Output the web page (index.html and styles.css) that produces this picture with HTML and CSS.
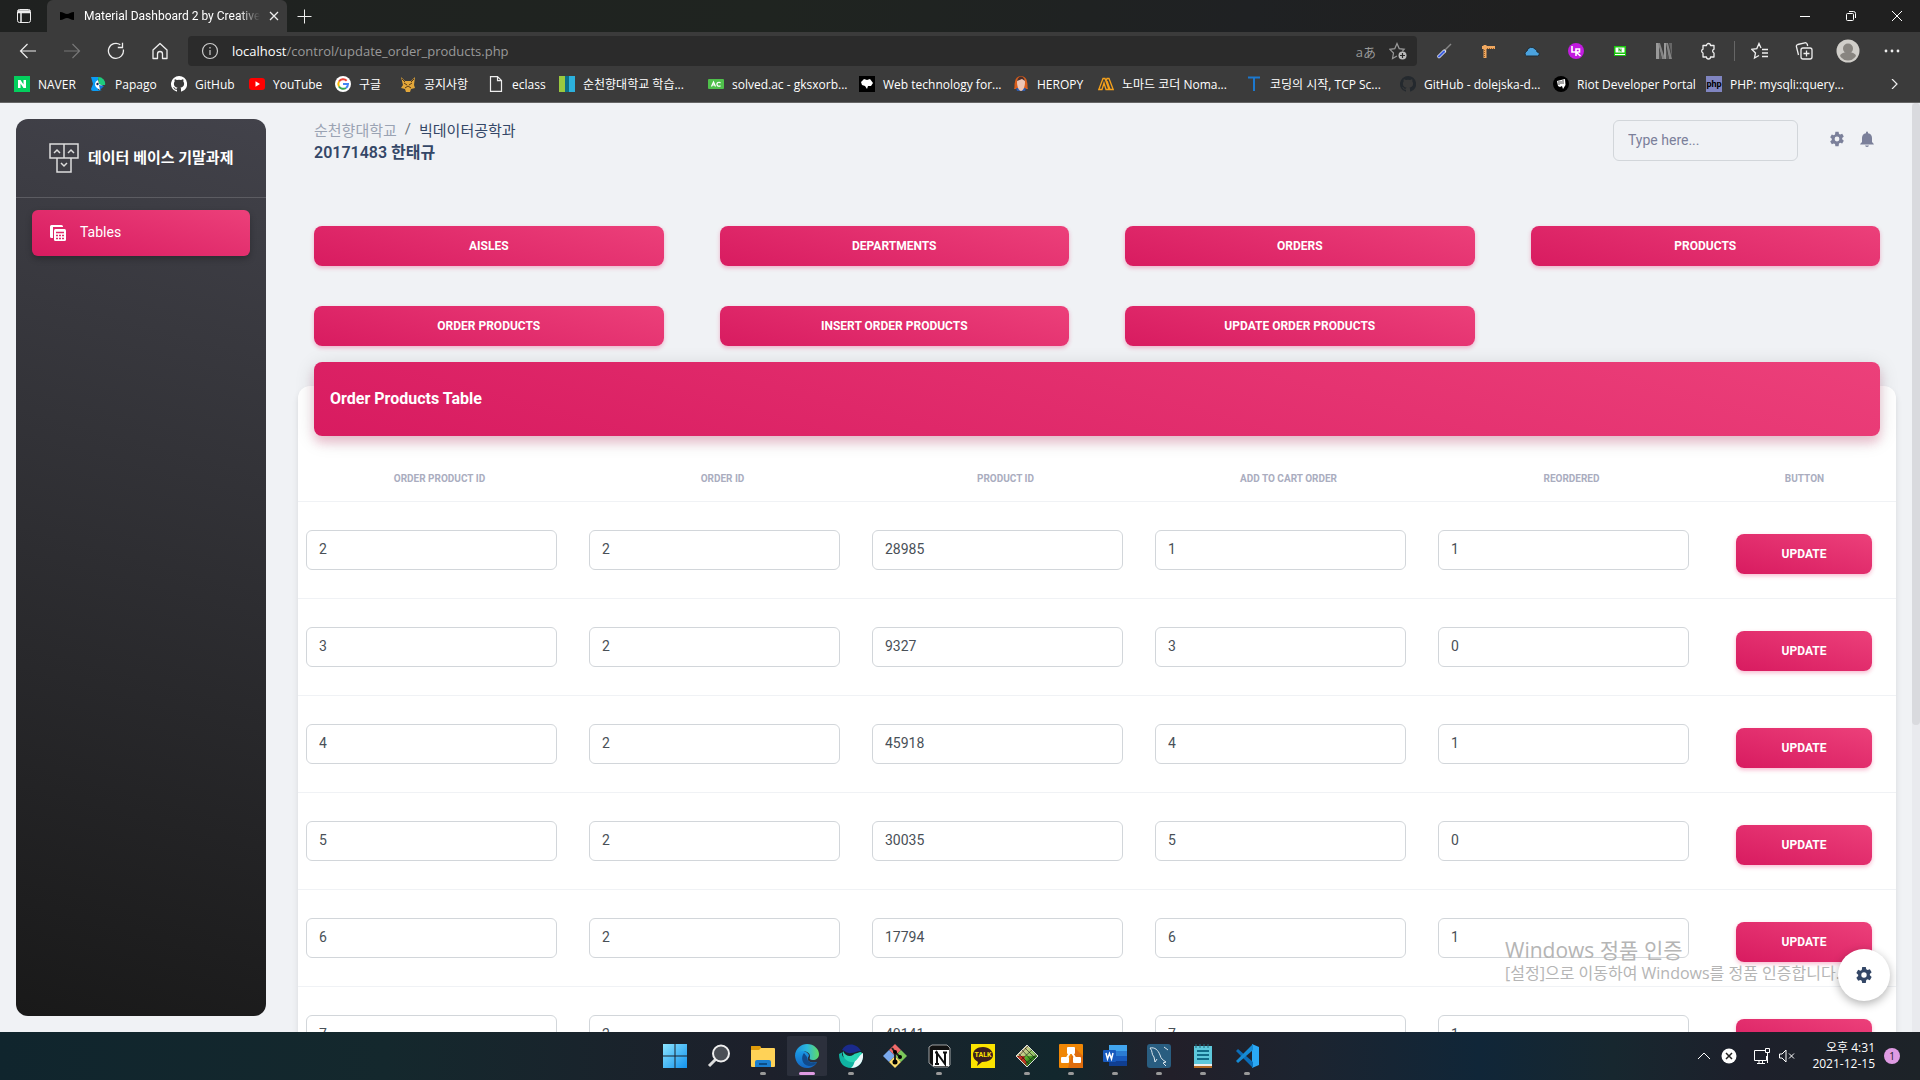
FILE: index.html
```html
<!DOCTYPE html>
<html lang="ko">
<head>
<meta charset="utf-8">
<title>Material Dashboard 2 by Creative Tim</title>
<link rel="stylesheet" href="styles.css">
</head>
<body>
<div class="tabstrip">
  <button class="tab-actions" aria-label="Tab actions"><svg class="i16" viewBox="0 0 16 16" fill="none" stroke="#eee"><rect x="1.500" y="1.500" width="13" height="13" rx="2"/><path d="M2 3h12M2 4.500h12M5 5v9" stroke-width="1.500"/></svg></button>
  <div class="tab">
    <svg class="i16" viewBox="0 0 16 16"><path d="M1 4c3 0 5 2 7 2s4-2 7-2v8c-3 0-5-2-7-2s-4 2-7 2z"/></svg>
    <span class="tab-title">Material Dashboard 2 by Creative</span>
    <button class="tab-close" aria-label="Close tab"><svg class="i10" viewBox="0 0 10 10" stroke="#eee" stroke-width="1.300"><path d="M1 1l8 8M9 1l-8 8"/></svg></button>
  </div>
  <button class="tab-new" aria-label="New tab"><svg class="i16" viewBox="0 0 16 16" stroke="#eee"><path d="M8.500 1.500v14M1.500 8.500h14"/></svg></button>
  <div class="window-buttons">
    <button aria-label="Minimize"><svg class="i10" viewBox="0 0 10 10" stroke="#fff"><path d="M0 5.500h10"/></svg></button>
    <button aria-label="Restore"><svg class="i10" viewBox="0 0 10 10" stroke="#fff" fill="none"><rect x=".5" y="2.500" width="7" height="7" rx="1"/><path d="M3 .5h4.500a2 2 0 0 1 2 2V7"/></svg></button>
    <button aria-label="Close"><svg class="i10" viewBox="0 0 10 10" stroke="#fff"><path d="M0 0l10 10M10 0L0 10"/></svg></button>
  </div>
</div>

<div class="toolbar">
  <button aria-label="Back"><svg class="i18" viewBox="0 0 18 18" fill="none" stroke="#eee" stroke-width="1.200"><path d="M17 9H1.500M8.500 2l-7 7 7 7"/></svg></button>
  <button aria-label="Forward"><svg class="i18" viewBox="0 0 18 18" fill="none" stroke="#777" stroke-width="1.200"><path d="M1 9h15.500M9.500 2l7 7-7 7"/></svg></button>
  <button aria-label="Reload"><svg class="i18" viewBox="0 0 18 18" fill="none" stroke="#eee" stroke-width="1.300"><path d="M16.300 7.500a7.500 7.500 0 1 1-3-4.700M15.500.8v4.700h-4.700"/></svg></button>
  <button aria-label="Home"><svg class="i18" viewBox="0 0 18 18" fill="none" stroke="#eee" stroke-width="1.300"><path d="M2 8l7-6.500L16 8v8.500h-4.500V12a2.500 2.500 0 0 0-5 0v4.500H2z" stroke-linejoin="round"/></svg></button>
  <div class="address">
    <svg class="i18" viewBox="0 0 18 18" fill="none" stroke="#ccc" stroke-width="1.200"><circle cx="9" cy="9" r="7.500"/><path d="M9 8v5M9 5v1.500"/></svg>
    <span class="url"><b>localhost</b>/control/update_order_products.php</span>
    <span class="translate">aあ</span>
    <svg class="i18" viewBox="0 0 18 18" fill="none" stroke="#999" stroke-width="1.200"><path d="M8 14l-4.500 2.500 1-5.500L.8 7.300l5-.7L8 1.500l2.200 5.100 5 .7-2 2"/><circle cx="13.500" cy="13.500" r="4" fill="#bbb" stroke="none"/><path d="M13.500 11v5M11 13.500h5" stroke="#2b2b2b"/></svg>
  </div>
  <div class="extensions">
    <button aria-label="Color picker"><svg class="i16" viewBox="0 0 16 16"><path d="M8.500 8L3 13.500" stroke="#eee" stroke-width="3.500" stroke-linecap="round"/><path d="M8 8.500L3 13.500" stroke="#3d5fe0" stroke-width="2.200" stroke-linecap="round"/><path d="M9 7l6-6" stroke="#888" stroke-width="1.500"/></svg></button>
    <button aria-label="Page ruler"><svg class="i16" viewBox="0 0 16 16"><path d="M2 4.500h13M5 2v13" stroke="#f0a860" stroke-width="3"/><path d="M7 5.500h8M4.500 7v7" stroke="#9a5f25" stroke-dasharray="1 1"/></svg></button>
    <button aria-label="Cloud"><svg class="i16" viewBox="0 0 16 16"><path d="M2.500 13a2.700 2.700 0 0 1 .5-5 4.500 4.500 0 0 1 8-2 2.800 2.800 0 0 1 2 3 2 2 0 0 1 .5 4z" fill="#4ba3df" stroke="#1f2e38"/></svg></button>
    <button aria-label="LiveReload"><svg class="i16" viewBox="0 0 16 16"><circle cx="8" cy="8" r="8" fill="#c21be0"/><path d="M4 3v6h3.500M8 13V6h3.500v3H8l4.500 4" fill="none" stroke="#fff" stroke-width="1.600"/></svg></button>
    <button aria-label="Naver"><svg class="i16" viewBox="0 0 16 16"><path d="M2 3h12v10H2z" fill="#19c60d"/><path d="M3.500 4.500h9v5h-9zM3 11h10v1H3z" fill="#fff"/><path d="M7 8.500v-3l2 3v-3" stroke="#19a010" fill="none"/></svg></button>
    <button aria-label="Notifier"><svg class="i16" viewBox="0 0 16 16"><path d="M0 0h3v16H0zM8 0h2v16H8z" fill="#999"/><path d="M2 0h2l5 16H6zM10 0h2l4 16h-3z" fill="#858585"/><path d="M13 0h3v14z" fill="#666"/><path d="M3 5v11h3zM10 5v11h3z" fill="#555"/></svg></button>
    <button aria-label="Extensions"><svg class="i18" viewBox="0 0 18 18" fill="none" stroke="#eee" stroke-width="1.300"><path d="M4 3.500h3.500a2 2 0 0 1 4 0H15v3.700a2 2 0 0 0 0 3.800v4h-3.500a2 2 0 0 1-4 0H4V11a2 2 0 0 1 0-3.800z" stroke-linejoin="round"/></svg></button>
  </div>
  <div class="browser-tools">
    <button aria-label="Favorites"><svg class="i18" viewBox="0 0 18 18" fill="none" stroke="#eee" stroke-width="1.300"><path d="M8 13.500L3.500 16l1-5L.8 7.300l5-.7L8 1.500l2 4.500M11 7.500h6M11 11h6M11 14.500h6"/></svg></button>
    <button aria-label="Collections"><svg class="i18" viewBox="0 0 18 18" fill="none" stroke="#eee" stroke-width="1.300"><rect x="6" y="6" width="11" height="11" rx="2"/><path d="M11.500 8.500v6M8.500 11.500h6M3.500 13L1.500 5a2 2 0 0 1 1.300-2.500l7-1.700a2 2 0 0 1 2.400 1.500L12.700 4"/></svg></button>
    <button aria-label="Profile"><svg class="i24" viewBox="0 0 24 24"><circle cx="12" cy="12" r="11.500" fill="#d0cec9"/><circle cx="12" cy="9.500" r="5" fill="#888580"/><path d="M4 17a8 4 0 0 1 16 0 9.500 9.500 0 0 1-16 0z" fill="#888580"/></svg></button>
    <button aria-label="Settings and more"><svg class="i16" viewBox="0 0 16 16" fill="#eee"><circle cx="2" cy="8" r="1.400"/><circle cx="8" cy="8" r="1.400"/><circle cx="14" cy="8" r="1.400"/></svg></button>
  </div>
</div>

<nav class="bookmarks">
  <a href="#"><svg class="i16" viewBox="0 0 16 16"><path d="M0 0h16v16H0z" fill="#03cf5d"/><path d="M4 12V4h2.500l3 4.500V4H12v8H9.500l-3-4.500V12z" fill="#fff"/></svg><span>NAVER</span></a>
  <a href="#"><svg class="i16" viewBox="0 0 16 16"><path d="M0 1h7v13l4 1H2a2 2 0 0 1-2-2l2-5z" fill="#0b9cf5"/><path d="M7 1a7 6.500 0 0 1 7 8H8z" fill="#1fcb7c"/><path d="M7 4a4.500 4.500 0 0 0-1 8l3 2 1-3 2-1-4-2z" fill="#fff"/><path d="M8 9l5 1-4 4z" fill="#1277d8"/><circle cx="6.500" cy="8" r="1.200" fill="#125"/></svg><span>Papago</span></a>
  <a href="#"><svg class="i16" viewBox="0 0 16 16"><path d="M8 0a8 8 0 0 0-2.500 15.600c.4.100.5-.2.500-.4v-1.500c-2.200.5-2.700-.9-2.700-.9-.4-.9-.9-1.200-.9-1.200-.7-.5.100-.5.100-.5.800.100 1.200.8 1.200.8.700 1.200 1.900.9 2.300.7.100-.5.300-.9.500-1.100-1.800-.2-3.600-.9-3.600-4 0-.9.300-1.600.8-2.100-.100-.200-.4-1 .1-2.100 0 0 .7-.2 2.200.8a7.500 7.500 0 0 1 4 0c1.500-1 2.200-.8 2.200-.8.400 1.100.2 1.900.1 2.100.5.600.8 1.300.8 2.100 0 3.100-1.900 3.800-3.700 4 .3.300.6.800.6 1.500v2.200c0 .2.100.5.600.4A8 8 0 0 0 8 0z" fill="#fff"/></svg><span>GitHub</span></a>
  <a href="#"><svg class="i16" viewBox="0 0 16 16"><rect y="2" width="16" height="12" rx="3" fill="#f00"/><path d="M6.500 5.300v5.400L11 8z" fill="#fff"/></svg><span>YouTube</span></a>
  <a href="#"><svg class="i16" viewBox="0 0 16 16"><circle cx="8" cy="8" r="8" fill="#fff"/><g fill="none" stroke-width="2"><path d="M4 5.500A5 5 0 0 1 11.700 4.700" stroke="#ea4335"/><path d="M4 10.500a5 5 0 0 1 0-5" stroke="#fbbc05"/><path d="M11 12a5 5 0 0 1-7-1.500" stroke="#34a853"/><path d="M8 8h5a5 5 0 0 1-2 4" stroke="#4285f4"/></g></svg><span>구글</span></a>
  <a href="#"><svg class="i16" viewBox="0 0 16 16"><path d="M1 1l4 4h6l4-4-1 8 1 3-4 1-1 3H6l-1-3-4-1 2-3z" fill="#e3a73a"/><path d="M4 7l3 2M12 7L9 9M5 12l3-2 3 2M2 3l3 3M14 3l-3 3" stroke="#5a3b18" fill="none"/></svg><span>공지사항</span></a>
  <a href="#"><svg class="i16" viewBox="0 0 16 16" fill="none" stroke="#eee" stroke-width="1.200"><path d="M2.500.6h7l4 4v10.800h-11zM9.500.6v4h4"/></svg><span>eclass</span></a>
  <a href="#"><svg class="i16" viewBox="0 0 16 16"><path d="M0 0h6v16H0z" fill="#9ac93f"/><path d="M6 0h4v16H6z" fill="#0b6f87"/><path d="M10 0h6v16h-6z" fill="#2cb1dd"/></svg><span>순천향대학교 학습...</span></a>
  <a href="#"><svg class="i16" viewBox="0 0 16 16"><rect y="3" width="16" height="10" rx="1" fill="#4fc04b"/><path d="M3.500 10.500L5.500 6l2 4.500M4.500 9h2.500M12.500 7a2 2 0 1 0 0 2.500" stroke="#fff" fill="none" stroke-width="1.200"/></svg><span>solved.ac - gksxorb...</span></a>
  <a href="#"><svg class="i16" viewBox="0 0 16 16"><path d="M0 0h16v16H0z"/><path d="M2 6l3-3 3 1 3-1 3 4-2 3H9l-1 3-2-3-3-1z" fill="#fff"/></svg><span>Web technology for...</span></a>
  <a href="#"><svg class="i16" viewBox="0 0 16 16"><path d="M1 13c1-2 0-5 1-7a6 6 0 0 1 12 0c1 3 0 5 1 7z" fill="#d85d1b"/><path d="M4 15h8l1-3H3z" fill="#2f5aa8"/><path d="M4 6a4 4 0 0 1 8 0c0 5-2 9-4 9S4 11 4 6z" fill="#edc5b4"/><path d="M4 5c1-6 7-6 8 0L9 3z" fill="#4b2f2b"/></svg><span>HEROPY</span></a>
  <a href="#"><svg class="i16" viewBox="0 0 16 16" fill="none" stroke="#f5a11b" stroke-width="1.300"><path d="M.8 13.500L5 2.500h2l4 11H8L6 7l-2 6.500zM8 5l1-2.500h2l4.200 11H12L9 5"/></svg><span>노마드 코더 Noma...</span></a>
  <a href="#"><svg class="i16" viewBox="0 0 16 16"><path d="M2 1.500h12M8 1v14" stroke="#1c78ce" stroke-width="2"/></svg><span>코딩의 시작, TCP Sc...</span></a>
  <a href="#"><svg class="i16" viewBox="0 0 16 16"><path d="M8 0a8 8 0 0 0-2.500 15.600c.4.100.5-.2.500-.4v-1.500c-2.200.5-2.700-.9-2.700-.9-.4-.9-.9-1.200-.9-1.200-.7-.5.100-.5.100-.5.800.100 1.200.8 1.200.8.700 1.200 1.900.9 2.300.7.100-.5.300-.9.500-1.100-1.800-.2-3.600-.9-3.600-4 0-.9.300-1.600.8-2.100-.100-.200-.4-1 .1-2.100 0 0 .7-.2 2.200.8a7.500 7.500 0 0 1 4 0c1.500-1 2.200-.8 2.200-.8.400 1.100.2 1.900.1 2.100.5.600.8 1.300.8 2.100 0 3.100-1.900 3.800-3.700 4 .3.300.6.800.6 1.500v2.200c0 .2.100.5.600.4A8 8 0 0 0 8 0z" fill="#24292e"/></svg><span>GitHub - dolejska-d...</span></a>
  <a href="#"><svg class="i16" viewBox="0 0 16 16"><circle cx="8" cy="8" r="8"/><path d="M4 5l8-2 .5 6-2.500 4-1-3-2 1-2-1z" fill="#fff"/><path d="M6 5v4M8 5v3M10 4v4" stroke="#000" stroke-width=".7"/></svg><span>Riot Developer Portal</span></a>
  <a href="#"><svg class="i16" viewBox="0 0 16 16"><path d="M0 0h16v16H0z" fill="#8085c1"/><text class="php-mark" x="8" y="11" text-anchor="middle">php</text></svg><span>PHP: mysqli::query...</span></a>
  <button class="more" aria-label="More bookmarks"><svg class="i10" viewBox="0 0 10 10" fill="none" stroke="#eee" stroke-width="1.200"><path d="M3 0l5 5-5 5"/></svg></button>
</nav>

<div class="page">
  <aside class="sidebar">
    <a class="brand" href="#">
      <svg class="brand-logo" viewBox="0 0 30 30" fill="none" stroke="#ddd" stroke-width="1.500"><path d="M1 1h14v14H1zM15 1h14v14H15zM8 15h14v14H8z"/><path d="M5 10l3-3 3 3M19 10l3-3 3 3M12 20l3 3 3-3"/></svg>
      <span>데이터 베이스 기말과제</span>
    </a>
    <a class="nav-link" href="#">
      <svg class="i18" viewBox="0 0 18 18"><path d="M14 4V2.500A1.500 1.500 0 0 0 12.500 1h-10A1.500 1.500 0 0 0 1 2.500v10A1.500 1.500 0 0 0 2.500 14H4V3h10z" fill="#fff"/><rect x="5" y="5" width="12" height="12" rx="1.500" fill="#fff"/><path d="M7 8.500h8M7 11.500h2M10 11.500h2M13 11.500h2M7 14.500h2M10 14.500h2M13 14.500h2" stroke="#e02a68" stroke-width="1.300"/></svg>
      <span>Tables</span>
    </a>
  </aside>

  <main class="content">
    <header class="topbar">
      <div>
        <div class="breadcrumb"><a href="#">순천향대학교</a><i>/</i><span>빅데이터공학과</span></div>
        <h1>20171483 한태규</h1>
      </div>
      <div class="topbar-tools">
        <input class="search" type="text" placeholder="Type here..." aria-label="Search">
        <a href="#" aria-label="Settings"><svg class="i16 muted" viewBox="0 0 20 20"><path fill-rule="evenodd" d="M8 1h4l.5 2.600 1.500.8 2.500-.9 2 3.500-2 1.800v1.600l2 1.800-2 3.500-2.500-.9-1.500.8L12 19H8l-.5-2.600-1.500-.8-2.500.9-2-3.500 2-1.800V9.600l-2-1.800 2-3.500 2.500.9 1.500-.8zM7 10a3 3 0 1 0 6 0 3 3 0 0 0-6 0z"/></svg></a>
        <a href="#" aria-label="Notifications"><svg class="i16 muted" viewBox="0 0 16 16"><path d="M8 16a2 2 0 0 0 2-1.500H6A2 2 0 0 0 8 16zM13 11V7a5 5 0 0 0-4-4.800V1.500a1 1 0 0 0-2 0v.7A5 5 0 0 0 3 7v4l-1.800 2v.5h13.600V13z"/></svg></a>
      </div>
    </header>

    <div class="actions">
      <button class="btn">Aisles</button>
      <button class="btn">Departments</button>
      <button class="btn">Orders</button>
      <button class="btn">Products</button>
      <button class="btn">Order Products</button>
      <button class="btn">Insert Order Products</button>
      <button class="btn">Update Order Products</button>
    </div>

    <section class="card">
      <h2 class="card-title">Order Products Table</h2>
      <table>
        <thead><tr><th>Order Product ID</th><th>Order ID</th><th>Product ID</th><th>Add to cart order</th><th>Reordered</th><th class="col-button">Button</th></tr></thead>
        <tbody>
          <tr><td><input aria-label="Order Product ID" value="2"></td><td><input aria-label="Order ID" value="2"></td><td><input aria-label="Product ID" value="28985"></td><td><input aria-label="Add to cart order" value="1"></td><td><input aria-label="Reordered" value="1"></td><td class="cell-button"><button class="btn">Update</button></td></tr>
          <tr><td><input aria-label="Order Product ID" value="3"></td><td><input aria-label="Order ID" value="2"></td><td><input aria-label="Product ID" value="9327"></td><td><input aria-label="Add to cart order" value="3"></td><td><input aria-label="Reordered" value="0"></td><td class="cell-button"><button class="btn">Update</button></td></tr>
          <tr><td><input aria-label="Order Product ID" value="4"></td><td><input aria-label="Order ID" value="2"></td><td><input aria-label="Product ID" value="45918"></td><td><input aria-label="Add to cart order" value="4"></td><td><input aria-label="Reordered" value="1"></td><td class="cell-button"><button class="btn">Update</button></td></tr>
          <tr><td><input aria-label="Order Product ID" value="5"></td><td><input aria-label="Order ID" value="2"></td><td><input aria-label="Product ID" value="30035"></td><td><input aria-label="Add to cart order" value="5"></td><td><input aria-label="Reordered" value="0"></td><td class="cell-button"><button class="btn">Update</button></td></tr>
          <tr><td><input aria-label="Order Product ID" value="6"></td><td><input aria-label="Order ID" value="2"></td><td><input aria-label="Product ID" value="17794"></td><td><input aria-label="Add to cart order" value="6"></td><td><input aria-label="Reordered" value="1"></td><td class="cell-button"><button class="btn">Update</button></td></tr>
          <tr><td><input aria-label="Order Product ID" value="7"></td><td><input aria-label="Order ID" value="2"></td><td><input aria-label="Product ID" value="40141"></td><td><input aria-label="Add to cart order" value="7"></td><td><input aria-label="Reordered" value="1"></td><td class="cell-button"><button class="btn">Update</button></td></tr>
        </tbody>
      </table>
    </section>
  </main>
  <div class="scrollbar"><div class="thumb"></div></div>

  <div class="watermark"><strong>Windows 정품 인증</strong><span>[설정]으로 이동하여 Windows를 정품 인증합니다.</span></div>
  <button class="fab" aria-label="Configurator"><svg class="i18" viewBox="0 0 20 20"><path fill="#344767" fill-rule="evenodd" d="M8 1h4l.5 2.600 1.500.8 2.500-.9 2 3.500-2 1.800v1.600l2 1.800-2 3.500-2.500-.9-1.500.8L12 19H8l-.5-2.600-1.500-.8-2.500.9-2-3.500 2-1.800V9.600l-2-1.800 2-3.500 2.500.9 1.500-.8zM7 10a3 3 0 1 0 6 0 3 3 0 0 0-6 0z"/></svg></button>
</div>

<footer class="taskbar">
  <div class="apps">
    <button aria-label="Start"><svg class="i24" viewBox="0 0 24 24"><defs><linearGradient id="win" x2="1" y2="1"><stop stop-color="#8be4ff"/><stop offset="1" stop-color="#1292ec"/></linearGradient></defs><path d="M0 0h11.500v11.500H0zM12.500 0H24v11.500H12.500zM0 12.500h11.500V24H0zM12.500 12.500H24V24H12.500z" fill="url(#win)"/></svg></button>
    <button aria-label="Search"><svg class="i24" viewBox="0 0 24 24"><path d="M9 15l-7 7" stroke="#ddd" stroke-width="3"/><circle cx="14" cy="9.500" r="8" fill="#4b4f56" stroke="#eee" stroke-width="2"/></svg></button>
    <button class="open" aria-label="Explorer"><svg class="i24" viewBox="0 0 24 24"><path d="M0 3a1 1 0 0 1 1-1h8l2 3v4H0z" fill="#e09c0b"/><rect y="4" width="24" height="19" rx="1" fill="#ffd257"/><path d="M0 3a1 1 0 0 1 1-1h8l1 2-2 2H0z" fill="#e09c0b"/><path d="M4 23v-5a2 2 0 0 1 2-2h12a2 2 0 0 1 2 2v5z" fill="#1b7fd0"/><path d="M8 20h8" stroke="#0c4e87" stroke-width="2"/></svg></button>
    <button class="open current" aria-label="Edge"><svg class="i24" viewBox="0 0 24 24"><defs><linearGradient id="edge" x2="1"><stop stop-color="#1a8fe0"/><stop offset=".5" stop-color="#2cb8dc"/><stop offset="1" stop-color="#62dc62"/></linearGradient><linearGradient id="edge-low" x2="0" y2="1"><stop stop-color="#1a9ae6"/><stop offset="1" stop-color="#1565c0"/></linearGradient></defs><path d="M0 11c1-3 5-5 9-4 3 1 5 3 5 5-3 3-1 8 8 6-2 4-6 6-10 6C5 24 0 18 0 11z" fill="url(#edge-low)"/><path d="M9 9c-3 3-3 12 5 13 4 0 6-1 8-4-5 2-10 0-10-5z" fill="#114a8b"/><path d="M0 11C1 4 6 0 12 0c7 0 12 5 12 10 0 4-3 6-6 6-3 0-4-1-3-3 1-6-10-9-15-2z" fill="url(#edge)"/></svg></button>
    <button class="open" aria-label="Whale"><svg class="i24" viewBox="0 0 24 24"><path d="M0 10c0 9 5 14 12 14 8 0 12-6 12-13l-2-3-9 4C9 16 3 14 3 10l1-2z" fill="#10b3a2"/><path d="M24 9c1 9-4 15-12 15 4-3 3-8 6-12z" fill="#edf9fb"/><path d="M4 7c2 5 7 6 10 4 2-2 5-2 8-3l1 2c-3 1-4 6-8 8-5 1-11-3-11-8z" fill="#27d3b4"/><path d="M3 6C7-2 18-1 22 7c-4 0-6 2-10 2C8 10 7 7 3 6z" fill="#1a2a8c"/></svg></button>
    <button aria-label="Git"><svg class="i24" viewBox="0 0 24 24"><path d="M12 0l6 6-6 6-6-6z" fill="#f06a6a"/><path d="M18 6l6 6-6 6-6-6z" fill="#7bc65a"/><path d="M6 6l6 6-6 6-6-6z" fill="#79a9ee"/><path d="M12 12l6 6-6 6-6-6z" fill="#fbdc6d"/><path d="M9 4l3 4v10M12 8l5 5" stroke="#222" stroke-width="2" fill="none"/><circle cx="12" cy="8" r="2"/><circle cx="12" cy="18" r="2.500"/><circle cx="17" cy="13" r="2"/></svg></button>
    <button class="open" aria-label="Notion"><svg class="i24" viewBox="0 0 24 24"><path d="M2 3l3-2h15l3 3v17l-2 2H7l-5-4z" fill="#111" stroke="#ddd" stroke-width=".7"/><path d="M6 6h16v16H6z" fill="#fff"/><path d="M10 20V9l8 11V8M8 8.500h3M16 8.500h4M8 20h4" stroke="#111" stroke-width="2" fill="none"/></svg></button>
    <button aria-label="KakaoTalk"><svg class="i24" viewBox="0 0 24 24"><path d="M0 0h24v24H0z" fill="#fbe300"/><path d="M12 3c-6 0-10 3-10 8 0 3 2 5 5 7l-1 4 5-4c7 0 11-3 11-7s-4-8-10-8z" fill="#3b1e1e"/><text class="talk-mark" x="12" y="13" text-anchor="middle">TALK</text></svg></button>
    <button class="open" aria-label="Color tool"><svg class="i24" viewBox="0 0 24 24"><defs><linearGradient id="rgb" x2="1" y2="1"><stop offset=".2" stop-color="#f2c39c"/><stop offset=".5" stop-color="#59b52b"/><stop offset=".9" stop-color="#073d10"/></linearGradient></defs><path d="M12 1l11 11-11 11L1 12z" fill="url(#rgb)"/><path d="M1.500 12L12 22 9 12z" fill="#c52e20"/><path d="M12 2l10 10H2z" fill="#e8e0b0" opacity=".5"/><path d="M7 6l10 11M4 10l10 10M10 4l10 10M6 16L17 6M10 20l11-9M3 13l10-11" stroke="#111" stroke-width=".6"/><path d="M12 1l11 11-11 11L1 12z" fill="none" stroke="#ddd"/></svg></button>
    <button class="open" aria-label="draw.io"><svg class="i24" viewBox="0 0 24 24"><rect width="24" height="24" rx="1" fill="#f08705"/><path d="M15 3l9 9v12H9z" fill="#df6c0c"/><path d="M12 7L6 17M12 7l6 10" stroke="#fff" stroke-width="2"/><rect x="8" y="3" width="8" height="7" rx="1" fill="#fff"/><rect x="2" y="13" width="8" height="6" rx="1" fill="#fff"/><rect x="14" y="13" width="8" height="6" rx="1" fill="#fff"/></svg></button>
    <button class="open" aria-label="Word"><svg class="i24" viewBox="0 0 24 24"><path d="M6 1h18v6H6z" fill="#41a5ee"/><path d="M6 7h18v5H6z" fill="#2b7cd3"/><path d="M6 12h18v5H6z" fill="#185abd"/><path d="M6 17h18v5H6z" fill="#103f91"/><rect y="6" width="13" height="12" rx="1" fill="#185abd"/><path d="M3 9l1.500 6L6.500 9.500 8.500 15 10 9" stroke="#fff" stroke-width="1.500" fill="none"/></svg></button>
    <button class="open" aria-label="MySQL Workbench"><svg class="i24" viewBox="0 0 24 24"><rect width="24" height="24" rx="3" fill="#295d80"/><path d="M3 4c5-1 8 2 10 7 1 4 3 5 6 7l-3 1 3 3M3 4c3 3 1 6 4 9l1 5 2-3M17 3l4 3" stroke="#dce7ee" fill="none"/></svg></button>
    <button class="open" aria-label="Notepad"><svg class="i24" viewBox="0 0 24 24"><path d="M3 2h18v20H3z" fill="#5ec8dc"/><path d="M3 20h18v3H3z" fill="#eee"/><path d="M3 23h18" stroke="#b36b24" stroke-width="2"/><path d="M6 7h12M6 11h12M6 15h12" stroke="#126c89" stroke-width="2"/><path d="M5 0v4M9 0v4M13 0v4M17 0v4" stroke="#216b7c"/></svg></button>
    <button class="open" aria-label="VS Code"><svg class="i24" viewBox="0 0 24 24"><path d="M17 0l7 3v18l-7 3z" fill="#2aa8f5"/><path d="M1 7l2-2 15 13v6z" fill="#0b6db8"/><path d="M1 17l2 2L18 6V0z" fill="#168bd5"/></svg></button>
  </div>
  <div class="tray">
    <svg class="i16" viewBox="0 0 16 16" fill="none" stroke="#fff"><path d="M2 11l6-6 6 6"/></svg>
    <svg class="i16 tray-x" viewBox="0 0 16 16"><circle cx="8" cy="8" r="7.500" fill="#fff"/><path d="M5 5l6 6M11 5l-6 6" stroke="#222" stroke-width="1.500"/></svg>
    <svg class="i16" viewBox="0 0 16 16" fill="none" stroke="#fff"><path d="M11 2.500H.5v10h12V8M5 12.500v3M8.500 12.500v3M3 15.500h8M11.500.5h4v4h-4zM13.500 5v10"/></svg>
    <svg class="i16" viewBox="0 0 16 16" fill="none" stroke="#fff"><path d="M.5 6h2.500l4-4v12l-4-4H.5zM10 5.500l5 5M15 5.500l-5 5"/></svg>
    <div class="clock"><span>오후 4:31</span><span>2021-12-15</span></div>
    <span class="badge">1</span>
  </div>
</footer>
</body>
</html>
```

FILE: styles.css
```css
* { box-sizing: border-box; }

body {
  margin: 0;
  height: 100vh;
  display: flex;
  flex-direction: column;
  overflow: hidden;
  font-family: Roboto, "Noto Sans CJK KR", sans-serif;
  font-size: 14px;
}

button {
  border: 0;
  padding: 0;
  background: none;
  font-family: inherit;
  display: flex;
  align-items: center;
  justify-content: center;
}

a { color: inherit; text-decoration: none; }
svg { display: block; flex: none; }

.i10 { width: 10px; height: 10px; }
.i16 { width: 16px; height: 16px; }
.i18 { width: 18px; height: 18px; }
.i24 { width: 24px; height: 24px; }

/* Browser chrome */
.tabstrip, .toolbar, .bookmarks, .taskbar {
  flex: none;
  font-family: "Open Sans", "Noto Sans CJK KR", sans-serif;
  font-size: 12px;
  color: #fff;
}

.tabstrip {
  height: 32px;
  display: flex;
  background: linear-gradient(90deg, #1f2120, #1f2420 40%, #1f2123 65%, #202020 80%);
}
.tab-actions { width: 47px; }
.tab {
  width: 240px;
  padding: 0 12px;
  display: flex;
  align-items: center;
  gap: 9px;
  background: #3b3b3b;
  border-radius: 6px 6px 0 0;
}
.tab-title {
  flex: 1;
  white-space: nowrap;
  font-family: Roboto, sans-serif;
  -webkit-mask-image: linear-gradient(90deg, #000 88%, transparent);
  mask-image: linear-gradient(90deg, #000 88%, transparent);
}
.tab-new { width: 34px; }
.window-buttons { margin-left: auto; display: flex; }
.window-buttons button { width: 46px; }

.toolbar {
  height: 38px;
  padding: 4px 6px;
  display: flex;
  background: #3b3b3b;
}
.toolbar button { width: 44px; }
.address {
  flex: 1;
  margin-left: 6px;
  padding: 0 10px 0 13px;
  display: flex;
  align-items: center;
  gap: 13px;
  background: #2b2b2b;
  border-radius: 4px;
}
.url { flex: 1; color: #999; font-size: 13px; }
.url b { color: #fff; font-weight: 400; }
.translate { color: #999; font-size: 13px; }
.extensions { display: flex; padding: 0 1px 0 5px; }
.browser-tools { display: flex; padding-left: 3px; }
.browser-tools::before {
  content: "";
  width: 1px;
  height: 20px;
  align-self: center;
  margin-right: 3px;
  background: #666;
}

.bookmarks {
  height: 33px;
  padding: 0 14px 4px;
  display: grid;
  grid-template-columns: 77px 80px 78px 86px 65px 88px 71px 149px 151px 154px 85px 148px 154px 153px 153px 1fr 24px;
  align-items: center;
  background: #3b3b3b;
  border-bottom: 1px solid #666;
}
.bookmarks a { display: flex; align-items: center; gap: 8px; white-space: nowrap; }
.more { height: 16px; }
.php-mark { font: bold 9px Roboto, sans-serif; }
.talk-mark { font: bold 7px Roboto, sans-serif; fill: #fbe300; }

/* Dashboard */
.page {
  flex: 1;
  min-height: 0;
  position: relative;
  display: flex;
  background: #f0f2f5;
  overflow: hidden;
}
.sidebar {
  flex: none;
  width: 250px;
  margin: 16px 0 16px 16px;
  border-radius: 12px;
  background: linear-gradient(195deg, #42424a, #191919);
  color: #fff;
}
.brand {
  height: 79px;
  padding: 0 32px;
  display: flex;
  align-items: center;
  gap: 8px;
  border-bottom: 1px solid #5c5c62;
  font-weight: 700;
  font-size: 15px;
  white-space: nowrap;
}
.brand span { padding-bottom: 4px; }
.brand-logo { width: 32px; height: 30px; }
.nav-link {
  height: 46px;
  margin: 12px 16px;
  padding: 0 17px;
  display: flex;
  align-items: center;
  gap: 13px;
  border-radius: 6px;
  background: linear-gradient(195deg, #ec407a, #d81b60);
  box-shadow: 0 3px 6px rgba(0, 0, 0, 0.25);
}
.nav-link span { padding-bottom: 2px; }

.content { flex: 1; min-width: 0; padding: 16px 16px 0 32px; }
.topbar {
  height: 107px;
  padding: 0 16px;
  display: flex;
  justify-content: space-between;
  align-items: flex-start;
}
.breadcrumb {
  height: 20px;
  display: flex;
  align-items: center;
  gap: 8px;
  color: #344767;
  font-size: 15px;
}
.breadcrumb a { color: #9aa3b3; }
.breadcrumb i { color: #6c757d; font-style: normal; }
h1 {
  margin: 0;
  font-size: 16px;
  line-height: 28px;
  font-weight: 600;
  color: #344767;
}
.topbar-tools { display: flex; align-items: center; gap: 14px; padding: 1px 5px 0 0; }
.topbar-tools a { padding-bottom: 4px; }
.search {
  width: 185px;
  height: 41px;
  margin-right: 17px;
  padding: 0 14px 2px;
  border: 1px solid #d2d6da;
  border-radius: 6px;
  background: transparent;
  font: 14px Roboto, sans-serif;
}
.search::placeholder { color: #7b809a; }
.muted { fill: #7b809a; }

.actions {
  padding: 0 16px;
  display: grid;
  grid-template-columns: repeat(4, 1fr);
  gap: 40px 56px;
}
.btn {
  height: 40px;
  border-radius: 8px;
  background: linear-gradient(195deg, #ec407a, #d81b60);
  box-shadow: 0 2px 4px rgba(233, 30, 99, 0.3);
  color: #fff;
  font-size: 12px;
  font-weight: 700;
  text-transform: uppercase;
}

.card {
  margin-top: 40px;
  background: #fff;
  border-radius: 12px;
  box-shadow: 0 4px 6px rgba(0, 0, 0, 0.1);
  display: flow-root;
}
.card-title {
  height: 74px;
  margin: -24px 16px 0;
  padding: 0 16px;
  line-height: 74px;
  border-radius: 8px;
  background: linear-gradient(195deg, #ec407a, #d81b60);
  box-shadow: 0 4px 20px rgba(0, 0, 0, 0.14), 0 7px 10px rgba(233, 30, 99, 0.2);
  color: #fff;
  font-size: 16px;
  font-weight: 700;
}
table { width: 100%; table-layout: fixed; border-collapse: collapse; }
th {
  height: 65px;
  padding: 22px 0 0;
  border-bottom: 1px solid #f0f2f5;
  color: #aaadbf;
  font-size: 10px;
  line-height: 18px;
  font-weight: 700;
  text-transform: uppercase;
}
.col-button { width: 183px; }
td { height: 97px; padding: 0 24px 0 8px; border-bottom: 1px solid #f0f2f5; }
td input {
  display: block;
  width: 100%;
  height: 40px;
  padding: 0 12px 2px;
  border: 1px solid #d2d6da;
  border-radius: 6px;
  background: #fff;
  color: #495057;
  font: 14px Roboto, sans-serif;
}
.cell-button { padding: 8px 24px 0 23px; }
.cell-button .btn { width: 100%; }

.scrollbar { flex: none; width: 8px; background: #e9eaee; }
.thumb { height: 67%; background: #d9dade; border-radius: 4px; }

.watermark {
  position: absolute;
  right: 75px;
  bottom: 48px;
  width: 340px;
  display: flex;
  flex-direction: column;
  white-space: nowrap;
  color: #b5b5b5;
  font-family: "Open Sans", "Noto Sans CJK KR", sans-serif;
  font-size: 16px;
  line-height: 22px;
}
.watermark strong { font-weight: 400; font-size: 21px; line-height: 24px; }
.fab {
  position: absolute;
  right: 30px;
  bottom: 31px;
  width: 52px;
  height: 52px;
  border-radius: 50%;
  background: #fff;
  box-shadow: 0 3px 10px rgba(0, 0, 0, 0.3);
}

/* Taskbar */
.taskbar {
  height: 48px;
  padding-left: 2px;
  display: grid;
  grid-template-columns: 1fr auto 1fr;
  background: linear-gradient(90deg, #10252d, #14282d 20%, #1d202b 40%, #12272d 55%, #221f29 61%, #1c2430 68%, #102638 77%, #17272f 84%, #1d202b 91%, #1d2328);
}
.apps { grid-column: 2; display: flex; }
.apps button {
  width: 44px;
  position: relative;
}
.apps .open::after {
  content: "";
  position: absolute;
  bottom: 5px;
  width: 6px;
  height: 3px;
  border-radius: 2px;
  background: #999;
}
.apps .current { background: #2c303c; background-clip: content-box; padding: 4px 2px; border-radius: 5px; }
.apps .current::after { width: 16px; background: #df9be3; }
.tray {
  justify-self: end;
  padding-right: 20px;
  display: flex;
  align-items: center;
  gap: 9px;
}
.tray-x { margin-right: 8px; }
.clock {
  width: 71px;
  display: flex;
  flex-direction: column;
  align-items: flex-end;
  line-height: 16px;
}
.badge {
  width: 16px;
  height: 16px;
  border-radius: 50%;
  background: #df9be3;
  color: #222;
  font-size: 10px;
  line-height: 16px;
  text-align: center;
}
```
